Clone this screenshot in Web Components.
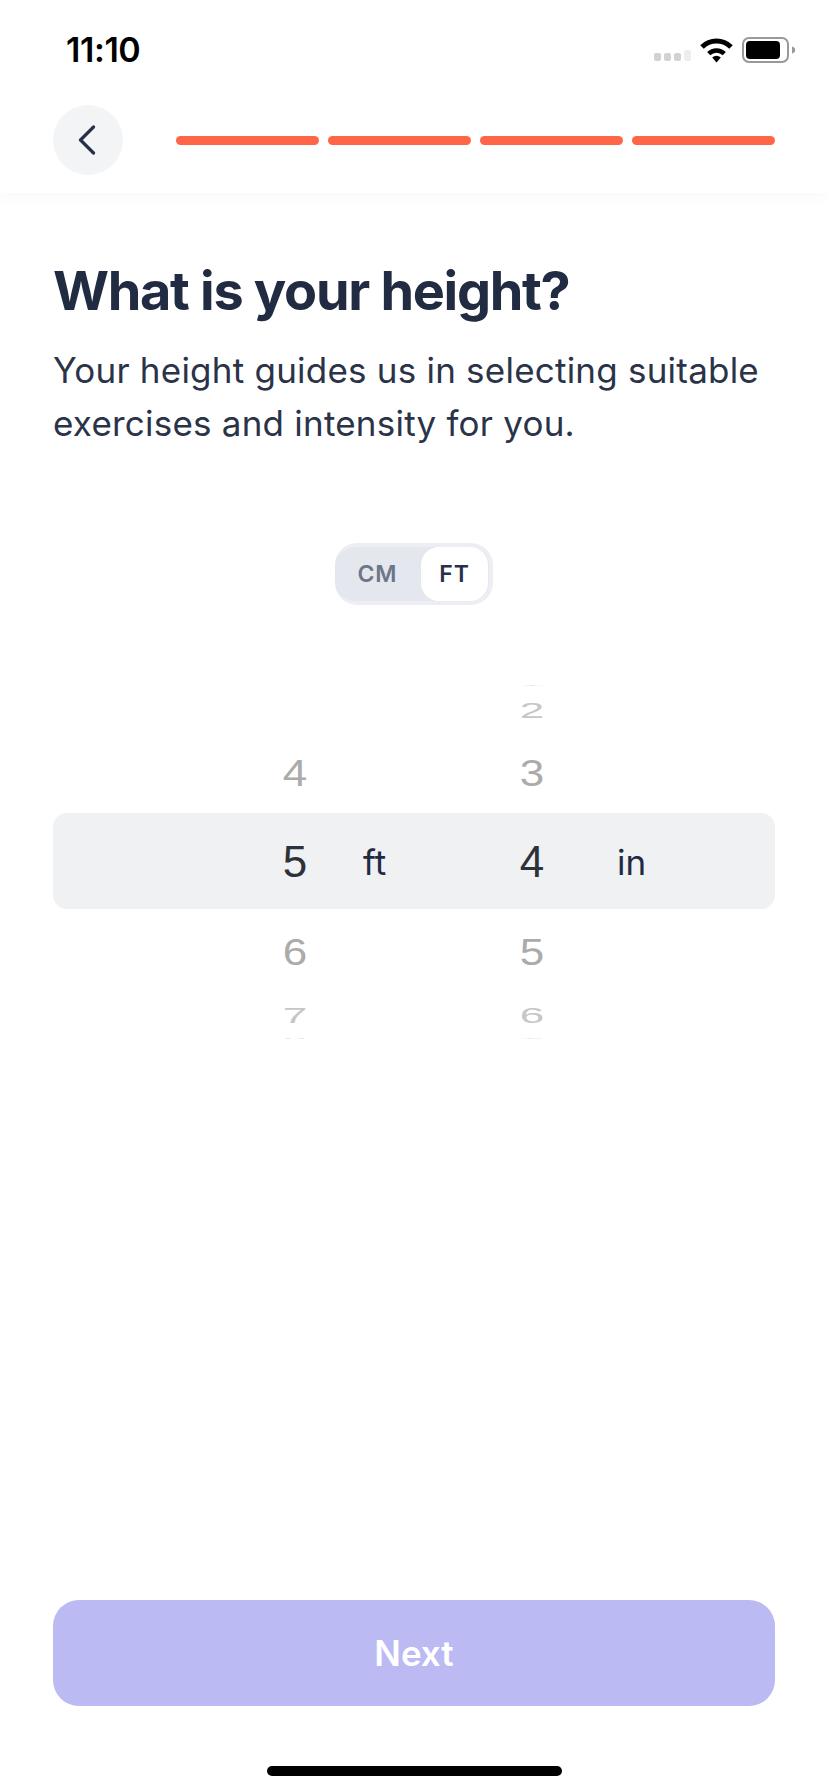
<!DOCTYPE html>
<html>
<head>
  <style>
    html, body { margin: 0; padding: 0; background: #fff; }
    body { font-family: "Inter", "Liberation Sans", sans-serif; }
  </style>
</head>
<body>
  <height-screen>
    <status-bar time="11:10" slot="top"></status-bar>
    <step-header steps="4" slot="top"></step-header>
    <intro-text heading="What is your height?">Your height guides us in selecting suitable exercises and intensity for you.</intro-text>
    <unit-toggle left="CM" right="FT"></unit-toggle>
    <height-picker></height-picker>
    <next-button slot="bottom">Next</next-button>
    <home-bar slot="bottom"></home-bar>
  </height-screen>

  <script>
    class HeightScreen extends HTMLElement {
      constructor() {
        super();
        this.attachShadow({ mode: 'open' });
        this.shadowRoot.innerHTML = `
          <style>
            :host { display: flex; flex-direction: column; width: 828px; height: 1792px; overflow: hidden; background: #fff; }
            .main { flex: 1; display: flex; flex-direction: column; }
          </style>
          <slot name="top"></slot>
          <div class="main"><slot></slot></div>
          <slot name="bottom"></slot>
        `;
      }
    }

    class StatusBar extends HTMLElement {
      connectedCallback() {
        this.attachShadow({ mode: 'open' });
        this.shadowRoot.innerHTML = `
          <style>
            :host { display: flex; align-items: center; justify-content: space-between; height: 100px; box-sizing: border-box; padding: 0 32px 0 66px; }
            .time { font: 600 34px/1 "Inter", sans-serif; color: #000; letter-spacing: -0.4px; }
            .icons { display: flex; align-items: center; gap: 9px; }
            .signal { display: flex; align-items: flex-end; gap: 3px; margin-top: 11px; }
            .signal i { width: 7px; height: 8px; border-radius: 2px; background: #d2d2d2; }
            .signal i:last-child { height: 11px; background: #eeeeee; }
            svg { display: block; }
          </style>
          <span class="time">${this.getAttribute('time')}</span>
          <div class="icons">
            <div class="signal"><i></i><i></i><i></i><i></i></div>
            <svg width="33" height="25" viewBox="0 0 33 25">
              <path d="M2 9A20.5 20.5 0 0 1 31 9" fill="none" stroke="#000" stroke-width="5"/>
              <path d="M8.7 15.7A11 11 0 0 1 24.3 15.7" fill="none" stroke="#000" stroke-width="4.5"/>
              <path d="M16.5 24.5L12.2 19.6A6 6 0 0 1 20.8 19.6Z" fill="#000"/>
            </svg>
            <svg width="54" height="26" viewBox="0 0 54 26">
              <rect x="1" y="1" width="45" height="24" rx="6" fill="#fff" stroke="#999" stroke-width="2"/>
              <rect x="4" y="4" width="34" height="18" rx="4" fill="#000"/>
              <path d="M50 9.5c2 .6 3.2 1.8 3.2 3.5s-1.2 2.9-3.2 3.5z" fill="#999"/>
            </svg>
          </div>
        `;
      }
    }

    class StepHeader extends HTMLElement {
      connectedCallback() {
        this.attachShadow({ mode: 'open' });
        const n = Number(this.getAttribute('steps'));
        this.shadowRoot.innerHTML = `
          <style>
            :host { display: flex; align-items: center; height: 93px; box-sizing: border-box; padding: 0 53px 13px; background: #fff; box-shadow: 0 6px 14px rgba(0,0,0,.025); position: relative; }
            .back { width: 70px; height: 70px; flex: none; border-radius: 50%; background: #f3f4f6; display: flex; align-items: center; justify-content: center; margin-right: 53px; }
            .bars { flex: 1; display: flex; gap: 9px; }
            .bars i { flex: 1; height: 9px; border-radius: 5px; background: #ff6647; }
            svg { display: block; margin-left: -2px; }
          </style>
          <div class="back">
            <svg width="18" height="30" viewBox="0 0 18 30"><path d="M15.5 2L2.5 15l13 13" fill="none" stroke="#28304a" stroke-width="3.2" stroke-linecap="round" stroke-linejoin="round"/></svg>
          </div>
          <div class="bars">${'<i></i>'.repeat(n)}</div>
        `;
      }
    }

    class IntroText extends HTMLElement {
      connectedCallback() {
        this.attachShadow({ mode: 'open' });
        this.shadowRoot.innerHTML = `
          <style>
            :host { display: block; padding: 69px 53px 0 53px; }
            h1 { margin: 0; font: 700 54px/58px "Inter", sans-serif; color: #212b42; letter-spacing: -1.3px; }
            p { margin: 24px 0 0; font: 400 35px/53px "Inter", sans-serif; color: #2a3348; letter-spacing: 0.22px; }
          </style>
          <h1>${this.getAttribute('heading')}</h1>
          <p><slot></slot></p>
        `;
      }
    }

    class UnitToggle extends HTMLElement {
      connectedCallback() {
        this.attachShadow({ mode: 'open' });
        this.shadowRoot.innerHTML = `
          <style>
            :host { display: flex; width: 158px; height: 62px; box-sizing: border-box; margin: 93px auto 0; padding: 0 1px 0 0; border: solid #eceef3; border-width: 4px 4px 4px 0; border-radius: 22px; background: #e4e7ee; align-items: stretch; font: 600 23px/1 "Inter", sans-serif; letter-spacing: 1px; }
            span { display: flex; align-items: center; justify-content: center; }
            .off { flex: 1; color: #6c7688; padding-right: 1px; }
            .on { width: 67px; background: #fff; border-radius: 18px; color: #28304a; }
          </style>
          <span class="off">${this.getAttribute('left')}</span>
          <span class="on">${this.getAttribute('right')}</span>
        `;
      }
    }

    class HeightPicker extends HTMLElement {
      connectedCallback() {
        this.attachShadow({ mode: 'open' });
        this.shadowRoot.innerHTML = `
          <style>
            :host { display: block; margin: 78px 53px 0; }
            .row { display: grid; grid-template-columns: 217px 50px 43px 144px 50px 60px 1fr; grid-template-rows: minmax(0, 1fr); align-items: center; }
            .d { text-align: center; font: 400 44px/1 "Liberation Sans", sans-serif; display: block; }
            .d.a { grid-column: 2; grid-row: 1; }
            .d.b { grid-column: 5; grid-row: 1; }
            .band { background: #eff1f3; border-radius: 14px; box-sizing: border-box; padding-top: 2px; }
            .u { font: 400 35px/1 "Inter", sans-serif; color: #1f2a44; grid-row: 1; }
            .ft { grid-column: 4; }
            .in { grid-column: 7; }
          </style>
          ${[
            [3, '', '1', 0.04, '#e6e6e6'],
            [47, '', '2', 0.5, '#c6c6c6'],
            [80, '4', '3', 0.86, '#ababab'],
            [96, '5', '4', 1, '#2d3138', true],
            [85, '6', '5', 0.86, '#ababab'],
            [41, '7', '6', 0.5, '#c6c6c6'],
            [6, '8', '7', 0.04, '#e6e6e6'],
          ].map(([h, a, b, sy, c, band]) => `
            <div class="row${band ? ' band' : ''}" style="height:${h}px">
              <span class="d a" style="transform:scaleY(${sy});color:${c}">${a}</span>
              ${band ? '<span class="u ft">ft</span>' : ''}
              <span class="d b" style="transform:scaleY(${sy});color:${c}">${b}</span>
              ${band ? '<span class="u in">in</span>' : ''}
            </div>`).join('')}
        `;
      }
    }

    class NextButton extends HTMLElement {
      connectedCallback() {
        this.attachShadow({ mode: 'open' });
        this.shadowRoot.innerHTML = `
          <style>
            :host { display: flex; align-items: center; justify-content: center; height: 106px; margin: 0 53px 60px; border-radius: 26px; background: #bcbaf2; color: #fff; font: 600 35px/1 "Inter", sans-serif; }
          </style>
          <slot></slot>
        `;
      }
    }

    class HomeBar extends HTMLElement {
      connectedCallback() {
        this.attachShadow({ mode: 'open' });
        this.shadowRoot.innerHTML = `
          <style>
            :host { display: block; width: 295px; height: 10px; margin: 0 auto 16px; border-radius: 5px; background: #000; }
          </style>
        `;
      }
    }

    customElements.define('height-screen', HeightScreen);
    customElements.define('status-bar', StatusBar);
    customElements.define('step-header', StepHeader);
    customElements.define('intro-text', IntroText);
    customElements.define('unit-toggle', UnitToggle);
    customElements.define('height-picker', HeightPicker);
    customElements.define('next-button', NextButton);
    customElements.define('home-bar', HomeBar);
  </script>
</body>
</html>
